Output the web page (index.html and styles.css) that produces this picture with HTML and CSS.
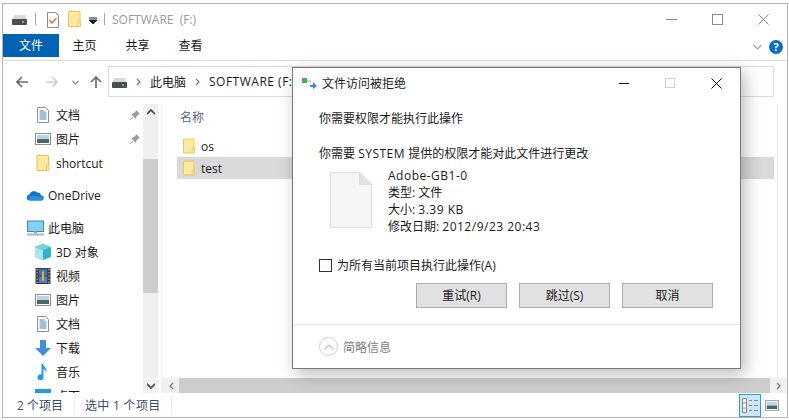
FILE: index.html
```html
<!DOCTYPE html>
<html lang="zh-CN">
<head>
  <meta charset="UTF-8">
  <title>SOFTWARE (F:)</title>
  <link rel="stylesheet" href="styles.css">
</head>
<body>
  <svg class="sprites" width="0" height="0">
    <symbol id="i-drive" viewBox="0 0 15 10">
      <path d="M2 0h11l2 5H0z" fill="#d9d9d9"/>
      <rect x="0" y="4" width="15" height="6" rx="1" fill="#4d4d4d"/>
      <rect x="10" y="6" width="2" height="2" fill="#3fd35a"/>
    </symbol>
    <symbol id="i-folder" viewBox="0 0 13 16">
      <path d="M.5.5h11.5v15H.5z" fill="#ffe9a0" stroke="#e8c252"/>
      <path d="M10 15.5v-5h2.500v5z" fill="#fff3c4" stroke="#e8c252"/>
    </symbol>
    <symbol id="i-check" viewBox="0 0 12 16">
      <path d="M.5.500h8l3 3v12H.5z" fill="#fff" stroke="#8a8a8a"/>
      <path d="M2.500 8l2.500 3 4.500-5" fill="none" stroke="#e0672c" stroke-width="1.300"/>
    </symbol>
    <symbol id="i-doc" viewBox="0 0 12 16">
      <path d="M.5.500h8l3 3v12H.5z" fill="#fff" stroke="#8f8f8f"/>
      <path d="M2.500 4h5M2.500 6h7M2.500 8h7M2.500 10h7M2.500 12h7" stroke="#3f7fb5"/>
    </symbol>
    <symbol id="i-pic" viewBox="0 0 16 12">
      <rect x=".5" y=".5" width="15" height="11" fill="#fff" stroke="#8f8f8f"/>
      <rect x="2" y="2" width="12" height="4" fill="#b9d5ee"/>
      <rect x="2" y="6" width="12" height="4" fill="#47695e"/>
    </symbol>
    <symbol id="i-pin" viewBox="0 0 10 10">
      <path d="M6 0l4 4-1.500.5L6.500 6.500 6 9 1 4l2.500-.5 2-2z" fill="#9a9a9a"/>
      <path d="M3 7L0 10" stroke="#9a9a9a"/>
    </symbol>
    <symbol id="i-cloud" viewBox="0 0 17 11">
      <path d="M3 11a3 3 0 0 1-.5-6A4.500 4.500 0 0 1 10 3a3.500 3.500 0 0 1 4 3 2.500 2.500 0 0 1 .5 5z" fill="#1273c9"/>
      <path d="M3 11a3 3 0 0 1 0-4l4-1 8 1.500a2.500 2.500 0 0 1 0 3.500z" fill="#2a8fe0"/>
    </symbol>
    <symbol id="i-pc" viewBox="0 0 17 15">
      <rect x=".5" y=".5" width="16" height="10.500" fill="#7fd0f5" stroke="#5c7f99"/>
      <rect x="7" y="11" width="3" height="2" fill="#9aa9b5"/>
      <rect x="0" y="13" width="17" height="2" fill="#a8b4bf"/>
    </symbol>
    <symbol id="i-cube" viewBox="0 0 16 16">
      <path d="M8 0l8 3v10l-8 3-8-3V3z" fill="#31b3cf"/>
      <path d="M0 3l8 3v10l-8-3z" fill="#a5e6ee"/>
      <path d="M8 0l8 3-8 3-8-3z" fill="#6fd3e2"/>
    </symbol>
    <symbol id="i-film" viewBox="0 0 14 15">
      <rect width="14" height="15" fill="#3a3a3a"/>
      <path d="M1 1h1v1H1zM1 4h1v1H1zM1 7h1v1H1zM1 10h1v1H1zM1 13h1v1H1zM12 1h1v1h-1zM12 4h1v1h-1zM12 7h1v1h-1zM12 10h1v1h-1zM12 13h1v1h-1z" fill="#ddd"/>
      <rect x="3" y="1" width="8" height="6" fill="#3f6fc0"/>
      <rect x="3" y="8" width="8" height="6" fill="#4f7fd0"/>
      <path d="M6 3h2v9H6z" fill="#e0b030"/>
    </symbol>
    <symbol id="i-down" viewBox="0 0 16 16">
      <path d="M5 0h6v8h5l-8 8-8-8h5z" fill="#3f8fdc"/>
    </symbol>
    <symbol id="i-note" viewBox="0 0 11 16">
      <path d="M4 0h1.500c.5 3 4.500 4 3.500 9-.3-2-1.500-3.500-3-4v8a3 3 0 1 1-2-2.500z" fill="#1e9be8"/>
    </symbol>
    <symbol id="i-desk" viewBox="0 0 16 14">
      <rect width="16" height="14" fill="#1e9be8"/>
    </symbol>
    <symbol id="i-blank" viewBox="0 0 42 56">
      <path d="M.5.500h29l12 12v43H.5z" fill="#f6f6f6" stroke="#dcdcdc"/>
      <path d="M29.500.500v12h12z" fill="#e4e4e4" stroke="#dcdcdc"/>
    </symbol>
    <symbol id="i-arrow-up" viewBox="0 0 8 6">
      <path d="M0 5l4-4 4 4" fill="none" stroke="#555" stroke-width="1.800"/>
    </symbol>
    <symbol id="i-caret" viewBox="0 0 6 8">
      <path d="M1 1l3 3-3 3" fill="none" stroke="#777" stroke-width="1.300"/>
    </symbol>
  </svg>

  <div class="window">
    <!-- Title bar -->
    <div class="titlebar">
      <svg class="qa-drive"><use href="#i-drive"/></svg>
      <span class="qa-sep"></span>
      <svg class="qa-check"><use href="#i-check"/></svg>
      <svg class="qa-folder"><use href="#i-folder"/></svg>
      <svg class="qa-drop" viewBox="0 0 8 8"><path d="M0 1h8M0 3h8L4 7z" stroke="#222" fill="#222" stroke-width="1"/></svg>
      <span class="qa-sep sep-two"></span>
      <span class="title-text">SOFTWARE&nbsp; (F:)</span>
      <div class="win-controls">
        <svg viewBox="0 0 11 11"><path d="M0 5.500h11" stroke="#8a8a8a"/></svg>
        <svg viewBox="0 0 11 11"><rect x=".5" y=".5" width="10" height="10" fill="none" stroke="#8a8a8a"/></svg>
        <svg viewBox="0 0 11 11"><path d="M.5.500l10 10M10.500.500l-10 10" stroke="#8a8a8a"/></svg>
      </div>
    </div>

    <!-- Ribbon tabs -->
    <div class="tabs">
      <span class="tab active">文件</span>
      <span class="tab">主页</span>
      <span class="tab">共享</span>
      <span class="tab">查看</span>
      <svg class="ribbon-chevron" viewBox="0 0 9 6"><path d="M.5 1l4 4 4-4" fill="none" stroke="#a0a0a0" stroke-width="1.200"/></svg>
      <span class="help">?</span>
    </div>

    <!-- Address row -->
    <div class="navbar">
      <svg class="nav-arrow" viewBox="0 0 12 12"><path d="M12 6H1M6 1L1 6l5 5" fill="none" stroke="#6a6a6a" stroke-width="1.600"/></svg>
      <svg class="nav-arrow forward" viewBox="0 0 12 12"><path d="M0 6h11M6 1l5 5-5 5" fill="none" stroke="#cfcfcf" stroke-width="1.600"/></svg>
      <svg class="nav-recent" viewBox="0 0 7 5"><path d="M.5 1l3 3 3-3" fill="none" stroke="#8a8a8a" stroke-width="1.200"/></svg>
      <svg class="nav-arrow up" viewBox="0 0 12 12"><path d="M6 12V1M1 6l5-5 5 5" fill="none" stroke="#6a6a6a" stroke-width="1.600"/></svg>
      <div class="address">
        <svg class="addr-drive"><use href="#i-drive"/></svg>
        <svg class="addr-caret"><use href="#i-caret"/></svg>
        <span>此电脑</span>
        <svg class="addr-caret"><use href="#i-caret"/></svg>
        <span class="lat">SOFTWARE (F:)</span>
      </div>
    </div>

    <!-- Sidebar + file list -->
    <div class="content">
      <div class="sidebar">
        <div class="tree">
          <div class="tree-row sub"><svg class="ico"><use href="#i-doc"/></svg>文档<svg class="pin"><use href="#i-pin"/></svg></div>
          <div class="tree-row sub"><svg class="ico"><use href="#i-pic"/></svg>图片<svg class="pin"><use href="#i-pin"/></svg></div>
          <div class="tree-row sub"><svg class="ico"><use href="#i-folder"/></svg>shortcut</div>
          <div class="tree-row top gap-a"><svg class="ico"><use href="#i-cloud"/></svg>OneDrive</div>
          <div class="tree-row top gap-b"><svg class="ico"><use href="#i-pc"/></svg>此电脑</div>
          <div class="tree-row sub"><svg class="ico"><use href="#i-cube"/></svg>3D 对象</div>
          <div class="tree-row sub"><svg class="ico"><use href="#i-film"/></svg>视频</div>
          <div class="tree-row sub"><svg class="ico"><use href="#i-pic"/></svg>图片</div>
          <div class="tree-row sub"><svg class="ico"><use href="#i-doc"/></svg>文档</div>
          <div class="tree-row sub"><svg class="ico"><use href="#i-down"/></svg>下载</div>
          <div class="tree-row sub"><svg class="ico"><use href="#i-note"/></svg>音乐</div>
          <div class="tree-row sub"><svg class="ico"><use href="#i-desk"/></svg>桌面</div>
        </div>
        <div class="vscroll">
          <span class="sb-btn"><svg><use href="#i-arrow-up"/></svg></span>
          <span class="sb-thumb"></span>
          <span class="sb-rest"></span>
          <span class="sb-btn flip"><svg><use href="#i-arrow-up"/></svg></span>
        </div>
      </div>

      <div class="main">
        <div class="files">
          <div class="col-head">名称</div>
          <div class="file-row"><svg class="ico"><use href="#i-folder"/></svg>os</div>
          <div class="file-row selected"><svg class="ico"><use href="#i-folder"/></svg>test</div>
        </div>
        <div class="hscroll">
          <span class="hs-btn"><svg class="left"><use href="#i-caret"/></svg></span>
          <span class="hs-thumb"></span>
          <span class="hs-btn"><svg><use href="#i-caret"/></svg></span>
        </div>
      </div>
    </div>

    <!-- Status bar -->
    <div class="statusbar">
      <span class="status-item">2 个项目</span>
      <span class="status-item wide">选中 1 个项目</span>
      <div class="views">
        <span class="view active">
          <svg viewBox="0 0 16 15"><path d="M.5.500h4v14h-4zM.5 5h4M.5 10h4" fill="#fff" stroke="#8a8a8a"/><path d="M7 2.500h3M12 2.500h4M7 7.500h3M12 7.500h4M7 12.500h3M12 12.500h4" stroke="#8a8a8a"/></svg>
        </span>
        <svg class="view-pic"><use href="#i-pic"/></svg>
      </div>
    </div>

    <!-- Access denied dialog -->
    <div class="dialog">
      <div class="dlg-title">
        <svg class="dlg-icon" viewBox="0 0 15 11"><rect y="0" width="5" height="5" fill="#3fb54a"/><path d="M5 3h4" stroke="#aaa"/><path d="M8 7h3V4l4 4-4 3V9H8z" fill="#2f8fe0"/></svg>
        <span>文件访问被拒绝</span>
        <div class="dlg-controls">
          <svg viewBox="0 0 11 11"><path d="M0 5.500h10" stroke="#111"/></svg>
          <svg viewBox="0 0 11 11"><rect x=".5" y=".5" width="9" height="9" fill="none" stroke="#cfcfcf"/></svg>
          <svg viewBox="0 0 11 11"><path d="M.5.500l10 10M10.500.500l-10 10" stroke="#111"/></svg>
        </div>
      </div>
      <div class="dlg-body">
        <p class="msg">你需要权限才能执行此操作</p>
        <p class="msg second">你需要 <span class="lat">SYSTEM</span> 提供的权限才能对此文件进行更改</p>
        <div class="file-info">
          <svg class="blank-file"><use href="#i-blank"/></svg>
          <div class="file-meta">
            <div class="lat">Adobe-GB1-0</div>
            <div>类型: 文件</div>
            <div>大小: <span class="lat">3.39 KB</span></div>
            <div>修改日期: <span class="lat">2012/9/23 20:43</span></div>
          </div>
        </div>
        <label class="apply-all"><span class="checkbox"></span>为所有当前项目执行此操作(A)</label>
        <div class="buttons">
          <span class="btn">重试(R)</span>
          <span class="btn">跳过(S)</span>
          <span class="btn">取消</span>
        </div>
      </div>
      <div class="dlg-footer">
        <span class="circle-up"><svg viewBox="0 0 10 6"><path d="M.5 5.500L5 1l4.500 4.500" fill="none" stroke="#c4c4c4" stroke-width="1.200"/></svg></span>
        简略信息
      </div>
    </div>
  </div>
</body>
</html>
```
FILE: styles.css
```css
html, body {
  margin: 0;
  padding: 0;
  background: #fff;
  font-family: "Open Sans", "Noto Sans CJK SC", sans-serif;
  font-size: 12px;
  color: #1a1a1a;
}
.sprites {
  display: block;
  height: 0;
}
.lat {
  letter-spacing: 0.5px;
}
.window {
  position: relative;
  box-sizing: border-box;
  width: 786px;
  height: 415px;
  margin: 3px 0 0 2px;
  border: 1px solid #b4b4b4;
  background: #fff;
  display: flex;
  flex-direction: column;
  overflow: hidden;
}
/* Title bar */
.titlebar {
  height: 30px;
  display: flex;
  align-items: center;
  flex: none;
}
.qa-drive {
  width: 15px;
  height: 10px;
  margin: 2px 0 0 9px;
}
.qa-sep {
  width: 1px;
  height: 12px;
  margin-left: 8px;
  background: #a8a8a8;
}
.qa-check {
  width: 12px;
  height: 16px;
  margin: 2px 0 0 11px;
}
.qa-folder {
  width: 13px;
  height: 16px;
  margin: 0 0 0 9px;
}
.qa-drop {
  width: 8px;
  height: 8px;
  margin: 3px 0 0 8px;
}
.sep-two {
  margin-left: 7px;
}
.title-text {
  margin-left: 7px;
  color: #9a9a9a;
}
.win-controls {
  margin-left: auto;
  display: flex;
  gap: 35px;
  padding-right: 18px;
}
.win-controls svg {
  width: 11px;
  height: 11px;
  display: block;
}
/* Ribbon */
.tabs {
  height: 26px;
  flex: none;
  display: flex;
  align-items: flex-start;
  border-bottom: 1px solid #dcdcdc;
}
.tab {
  width: 53px;
  height: 23px;
  line-height: 23px;
  text-align: center;
}
.tab.active {
  width: 56px;
  margin-right: -1px;
  background: #0063b1;
  color: #fff;
}
.ribbon-chevron {
  width: 9px;
  height: 6px;
  margin: 10px 0 0 auto;
}
.help {
  width: 14px;
  height: 14px;
  margin: 6px 4px 0 7px;
  border-radius: 50%;
  background: #0a6fc4;
  color: #fff;
  font-weight: 700;
  font-size: 11px;
  line-height: 14px;
  text-align: center;
}
/* Address row */
.navbar {
  height: 43px;
  flex: none;
  display: flex;
  align-items: flex-start;
}
.nav-arrow {
  width: 12px;
  height: 12px;
  margin: 15px 0 0 13px;
}
.nav-arrow.forward {
  margin-left: 18px;
}
.nav-recent {
  width: 7px;
  height: 5px;
  margin: 19px 0 0 14px;
}
.nav-arrow.up {
  margin-left: 11px;
}
.address {
  box-sizing: border-box;
  width: 666px;
  height: 31px;
  margin: 5px 0 0 6px;
  border: 1px solid #d9d9d9;
  display: flex;
  align-items: center;
  white-space: nowrap;
}
.addr-drive {
  width: 15px;
  height: 10px;
  margin: 3px 0 0 3px;
}
.addr-caret {
  width: 6px;
  height: 8px;
  margin: 0 8px 0 9px;
}
/* Sidebar */
.content {
  flex: 1;
  display: flex;
  min-height: 0;
}
.sidebar {
  width: 155px;
  flex: none;
  display: flex;
}
.tree {
  width: 140px;
  flex: none;
  overflow: hidden;
}
.tree-row {
  height: 24px;
  display: flex;
  align-items: center;
  position: relative;
  top: -1px;
}
.tree-row.sub {
  padding-left: 53px;
}
.tree-row.top {
  padding-left: 45px;
}
.tree-row.gap-a {
  margin-top: 8px;
}
.tree-row.gap-b {
  margin-top: 9px;
}
.tree-row .ico {
  position: absolute;
  left: 32px;
  top: 4px;
  width: 16px;
  height: 16px;
}
.tree-row.top .ico {
  left: 24px;
  width: 17px;
}
.tree-row .pin {
  position: absolute;
  right: 3px;
  top: 7px;
  width: 10px;
  height: 10px;
}
.vscroll {
  width: 15px;
  flex: none;
  display: flex;
  flex-direction: column;
  background: #f0f0f0;
}
.sb-btn {
  height: 15px;
  flex: none;
  display: flex;
  align-items: center;
  justify-content: center;
}
.sb-btn svg {
  width: 8px;
  height: 6px;
}
.sb-btn.flip svg {
  transform: scaleY(-1);
}
.sb-thumb {
  height: 134px;
  margin-top: 40px;
  background: #cdcdcd;
  flex: none;
}
.sb-rest {
  flex: 1;
}
/* File list */
.main {
  flex: 1;
  min-width: 0;
  display: flex;
  flex-direction: column;
  margin-left: 3px;
  border-left: 1px solid #f0f0f0;
}
.files {
  flex: 1;
  padding: 0 3px 0 15px;
  border-right: 1px solid #e8e8e8;
  margin-right: 9px;
}
.col-head {
  height: 28px;
  line-height: 28px;
  color: #5a6b85;
  padding-left: 3px;
  margin-bottom: 3px;
}
.file-row {
  height: 22px;
  display: flex;
  align-items: center;
  gap: 6px;
  padding-left: 6px;
}
.file-row .ico {
  width: 12px;
  height: 16px;
}
.file-row.selected {
  background: #d9d9d9;
}
.hscroll {
  height: 15px;
  flex: none;
  display: flex;
  background: #f0f0f0;
}
.hs-btn {
  width: 17px;
  flex: none;
  display: flex;
  align-items: center;
  justify-content: center;
}
.hs-btn svg {
  width: 6px;
  height: 8px;
}
.hs-btn svg.left {
  transform: scaleX(-1);
}
.hs-thumb {
  flex: 1;
  background: #cdcdcd;
}
/* Status bar */
.statusbar {
  height: 24px;
  flex: none;
  display: flex;
  align-items: center;
  color: #3a4a5f;
  padding-left: 14px;
}
.status-item {
  padding-right: 11px;
  margin-right: 10px;
  border-right: 1px solid #ececec;
}
.status-item.wide {
  letter-spacing: 0.3px;
}
.views {
  margin-left: auto;
  display: flex;
  align-items: center;
  gap: 4px;
  padding-right: 8px;
}
.view {
  box-sizing: border-box;
  width: 22px;
  height: 23px;
  display: flex;
  align-items: center;
  justify-content: center;
  background: #cce8f6;
  border: 1px solid #26a0da;
}
.view svg {
  width: 16px;
  height: 15px;
}
.view-pic {
  width: 14px;
  height: 11px;
}
/* Dialog */
.dialog {
  position: absolute;
  left: 289px;
  top: 63px;
  box-sizing: border-box;
  width: 449px;
  height: 302px;
  background: #fff;
  border: 1px solid #7a7a7a;
  box-shadow: 4px 5px 16px rgba(0,0,0,0.28);
  display: flex;
  flex-direction: column;
}
.dlg-title {
  height: 30px;
  flex: none;
  display: flex;
  align-items: center;
  padding-left: 9px;
}
.dlg-icon {
  width: 15px;
  height: 11px;
  margin-right: 5px;
}
.dlg-controls {
  margin-left: auto;
  display: flex;
  gap: 35px;
  padding-right: 18px;
}
.dlg-controls svg {
  width: 11px;
  height: 11px;
  display: block;
}
.dlg-body {
  padding: 0 27px 0 26px;
}
.msg {
  margin: 12px 0 0;
  line-height: 17px;
}
.msg.second {
  margin-top: 18px;
}
.file-info {
  display: flex;
  margin-top: 5px;
  padding-left: 11px;
}
.blank-file {
  width: 42px;
  height: 56px;
  margin-top: 5px;
  flex: none;
}
.file-meta {
  margin-left: 16px;
  line-height: 17px;
}
.apply-all {
  display: flex;
  align-items: center;
  height: 16px;
  margin-top: 22px;
}
.checkbox {
  box-sizing: border-box;
  width: 13px;
  height: 13px;
  margin-right: 5px;
  border: 1px solid #333;
}
.buttons {
  display: flex;
  justify-content: flex-end;
  gap: 12px;
  margin-top: 10px;
}
.btn {
  box-sizing: border-box;
  width: 91px;
  height: 25px;
  line-height: 23px;
  text-align: center;
  background: #e1e1e1;
  border: 1px solid #adadad;
}
.dlg-footer {
  flex: 1;
  margin-top: 16px;
  border-top: 1px solid #e6e6e6;
  display: flex;
  align-items: center;
  padding-left: 26px;
  color: #808080;
}
.circle-up {
  box-sizing: border-box;
  width: 19px;
  height: 19px;
  margin-right: 5px;
  border: 1px solid #d0d0d0;
  border-radius: 50%;
  display: flex;
  align-items: center;
  justify-content: center;
}
.circle-up svg {
  width: 10px;
  height: 6px;
}
```
